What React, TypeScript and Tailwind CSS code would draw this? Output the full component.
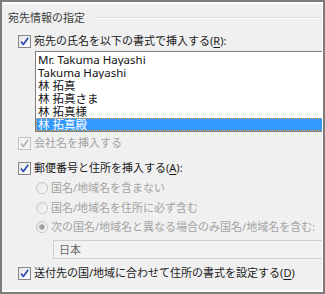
import React from "react";

const FONT = "font-['Noto_Sans','Noto_Sans_CJK_JP',sans-serif]";

function CheckBox({ disabled = false }: { disabled?: boolean }) {
  return (
    <span
      className={`flex h-[13px] w-[13px] shrink-0 items-center justify-center border ${
        disabled ? "border-[#c2c2c2] bg-[#f4f4f4]" : "border-[#858585] bg-gradient-to-br from-[#e6e6e6] to-white"
      }`}
    >
      <svg width="11" height="11" viewBox="0 0 11 11">
        <path
          d="M2 5.6 L4.3 8.4 L9.2 1.8"
          fill="none"
          stroke={disabled ? "#b0b0b0" : "#2447b5"}
          strokeWidth="1.6"
          strokeLinejoin="round"
        />
      </svg>
    </span>
  );
}

function Radio({ checked = false }: { checked?: boolean }) {
  return (
    <span className="flex h-[12px] w-[12px] shrink-0 items-center justify-center rounded-full border border-[#c6c6c6] bg-gradient-to-br from-[#e6e6e6] to-[#fafafa]">
      {checked && <span className="h-[6px] w-[6px] rounded-full border border-[#b5b5b5] bg-[#9d9d9d]" />}
    </span>
  );
}

const NAMES = ["Mr. Takuma Hayashi", "Takuma Hayashi", "林 拓真", "林 拓真さま", "林 拓真様", "林 拓真殿"];

export default function App() {
  return (
    <div className={`h-[294px] w-[325px] border-2 border-[#7c7c7c] bg-white pt-[2px] pr-[1px] pb-[2px] ${FONT}`}>
      <div className="flex h-full flex-col overflow-hidden bg-[#f0f0f0] text-[11px] leading-4 text-[#1b1b1b]">
        {/* group title */}
        <div className="mt-[6px] flex h-4 items-center pl-[6px]">
          <span className="text-[#3a3a3a]">宛先情報の指定</span>
          <div className="ml-[8px] flex flex-1 flex-col">
            <div className="h-px bg-[#d3dfe3]" />
            <div className="h-px bg-[#fafafa]" />
          </div>
        </div>

        <div className="mt-[7px] flex h-4 items-center gap-[3px] pl-[16px]">
          <CheckBox />
          <span>
            宛先の氏名を以下の書式で挿入する(<span className="underline underline-offset-2">R</span>):
          </span>
        </div>

        {/* list box */}
        <div className="ml-[33px] mt-[2px] flex h-[81px] w-[300px] shrink-0 flex-col border border-[#7e7e7e] bg-white pt-[1px] text-[11.5px]">
          {NAMES.map((n, i) => {
            const sel = i === NAMES.length - 1;
            return (
              <div
                key={n}
                className={`flex h-[13px] items-center overflow-hidden pl-[2px] leading-[13px] ${
                  sel ? "bg-[#3399ff] text-white outline-1 -outline-offset-1 outline-dotted outline-[#f0a048]" : "text-[#111]"
                }`}
              >
                {n}
              </div>
            );
          })}
        </div>

        <div className="mt-[3px] flex h-4 items-center gap-[3px] pl-[16px] text-[#a3a3a3]">
          <CheckBox disabled />
          <span>会社名を挿入する</span>
        </div>

        <div className="mt-[9px] flex h-4 items-center gap-[3px] pl-[16px]">
          <CheckBox />
          <span>
            郵便番号と住所を挿入する(<span className="underline underline-offset-2">A</span>):
          </span>
        </div>

        <div className="mt-[4px] flex h-4 items-center gap-[3px] pl-[34px] text-[#a3a3a3]">
          <Radio />
          <span>国名/地域名を含まない</span>
        </div>
        <div className="mt-[3.5px] flex h-4 items-center gap-[3px] pl-[34px] text-[#a3a3a3]">
          <Radio />
          <span>国名/地域名を住所に必ず含む</span>
        </div>
        <div className="mt-[3.5px] flex h-4 items-center gap-[3px] pl-[34px] text-[#a3a3a3]">
          <Radio checked />
          <span>次の国名/地域名と異なる場合のみ国名/地域名を含む:</span>
        </div>

        <div className="ml-[51px] mt-[5px] flex h-[19px] w-[300px] shrink-0 items-center border border-[#cfcfcf] bg-[#f2f2f2] pl-[5px] text-[#6a6a6a]">
          日本
        </div>

        <div className="mt-[6px] flex h-4 items-center gap-[3px] pl-[16px]">
          <CheckBox />
          <span>
            送付先の国/地域に合わせて住所の書式を設定する(<span className="underline underline-offset-2">D</span>)
          </span>
        </div>
      </div>
    </div>
  );
}
